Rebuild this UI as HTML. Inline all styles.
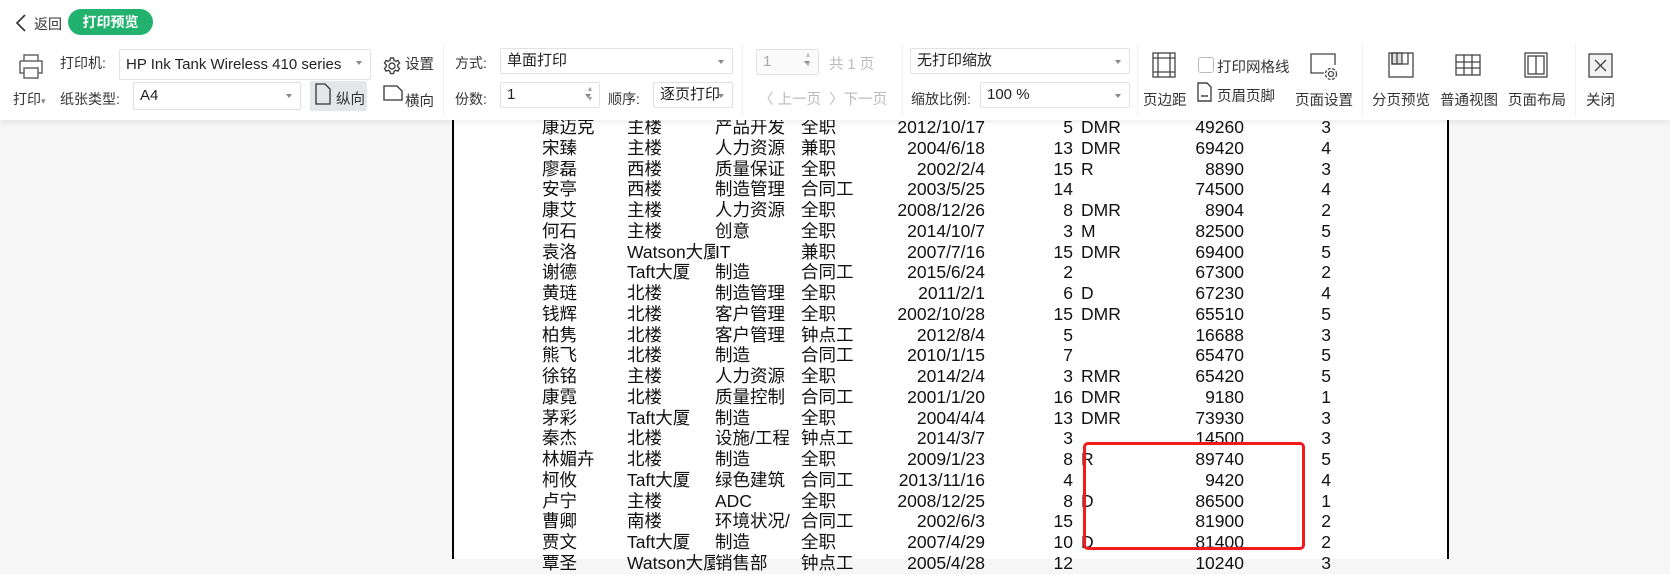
<!DOCTYPE html>
<html><head><meta charset="utf-8"><style>
*{margin:0;padding:0;box-sizing:border-box}
body{width:1670px;height:559px;overflow:hidden;background:#f6f6f6;font-family:"Liberation Sans","Noto Sans CJK SC",sans-serif;color:#333;position:relative;font-size:13.5px}
.a{position:absolute;white-space:nowrap}
#tb{position:absolute;left:0;top:0;width:1670px;height:120px;background:#fff;box-shadow:0 2px 6px rgba(0,0,0,.08);z-index:5}
.sel{position:absolute;border:1px solid #e2e2e2;border-radius:2px;background:#fff;height:26px;line-height:24px;padding-left:6px;font-size:15px;color:#222}
.sel::after{content:"";position:absolute;right:8px;top:11px;border:3px solid transparent;border-top:4px solid #888}
.sep{position:absolute;top:44px;width:1px;height:72px;background:#f0f0f0}
.lab{font-size:14px;color:#333}
.g{color:#bbb}
#page{position:absolute;left:450px;top:0;width:997px;height:559px;background:#fff;border-left:2px solid #000;border-right:2px solid #000;margin-left:2px}
.r{position:absolute;font-size:17.5px;color:#111;white-space:nowrap;height:21px;line-height:21px}
.r span{position:absolute;top:0}
</style></head><body>
<div id="page"></div>
<div id="rows"></div>
<div class="a" style="left:1083px;top:442px;width:222px;height:108px;border:3px solid #f21a1a;border-radius:5px;z-index:3"></div>

<div id="tb">
<svg class="a" style="left:15px;top:14px" width="12" height="18" viewBox="0 0 12 18"><path d="M10 1 L2 9 L10 17" fill="none" stroke="#333" stroke-width="1.6"/></svg>
<div class="a" style="left:34px;top:14px;font-size:14px">返回</div>
<div class="a" style="left:68px;top:9px;width:85px;height:26px;border-radius:13px;background:#22b26d;color:#fff;font-weight:bold;font-size:14px;text-align:center;line-height:26px">打印预览</div>

<svg class="a" style="left:17px;top:52px" width="28" height="28" viewBox="0 0 28 28" fill="none" stroke="#666" stroke-width="1.5"><path d="M7 9V3h14v6M3 9h22v12h-4M7 21H3V9M7 16h14v10H7z"/></svg>
<div class="a lab" style="left:13px;top:89px">打印<span style="font-size:9px;color:#888">▾</span></div>
<div class="a lab" style="left:60px;top:53px">打印机:</div>
<div class="sel" style="left:119px;top:49px;width:252px;height:31px;line-height:29px">HP Ink Tank Wireless 410 series</div>
<svg class="a" style="left:382px;top:56px" width="20" height="20" viewBox="0 0 20 20" fill="none" stroke="#444" stroke-width="1.4"><circle cx="10" cy="10" r="3"/><path d="M8.5 2h3l.5 2.3 1.8 1 2.2-.8 1.5 2.6-1.7 1.6v2.2l1.7 1.6-1.5 2.6-2.2-.8-1.8 1-.5 2.3h-3l-.5-2.3-1.8-1-2.2.8-1.5-2.6 1.7-1.6V8.7L2.5 7.1 4 4.5l2.2.8 1.8-1z"/></svg>
<div class="a lab" style="left:405px;top:53px;font-size:14.5px">设置</div>
<div class="a lab" style="left:60px;top:89px">纸张类型:</div>
<div class="sel" style="left:133px;top:82px;width:168px;height:28px;line-height:26px">A4</div>
<div class="a" style="left:310px;top:81px;width:57px;height:30px;background:#e4e6ea;border-radius:2px"></div>
<svg class="a" style="left:314px;top:83px" width="18" height="22" viewBox="0 0 18 22" fill="none" stroke="#333" stroke-width="1.3"><path d="M2 1h9l5 5v15H2z"/></svg>
<div class="a lab" style="left:336px;top:88px;font-size:14.5px">纵向</div>
<svg class="a" style="left:383px;top:84px" width="20" height="18" viewBox="0 0 20 18" fill="none" stroke="#333" stroke-width="1.3"><path d="M1 2h13l5 5v9H1z"/></svg>
<div class="a lab" style="left:405px;top:90px;font-size:14.5px">横向</div>
<div class="sep" style="left:443px"></div>

<div class="a lab" style="left:455px;top:53px">方式:</div>
<div class="sel" style="left:500px;top:48px;width:233px">单面打印</div>
<div class="a lab" style="left:455px;top:89px">份数:</div>
<div class="sel" style="left:500px;top:82px;width:100px">1</div>
<div class="a" style="left:588px;top:84px;font-size:8px;color:#999;line-height:10px">▴<br>▾</div>
<div class="a lab" style="left:608px;top:89px">顺序:</div>
<div class="sel" style="left:653px;top:82px;width:80px">逐页打印</div>
<div class="sep" style="left:742px"></div>

<div class="sel g" style="left:756px;top:49px;width:63px;color:#aaa;background:#fafafa">1</div>
<div class="a" style="left:806px;top:50px;font-size:8px;color:#bbb;line-height:10px">▴<br>▾</div>
<div class="a lab g" style="left:829px;top:53px;font-size:14.5px">共 1 页</div>
<div class="a lab g" style="left:759px;top:88px;font-size:14.5px">〈 上一页&nbsp;&nbsp;〉下一页</div>
<div class="sep" style="left:902px"></div>

<div class="sel" style="left:910px;top:48px;width:220px">无打印缩放</div>
<div class="a lab" style="left:911px;top:89px">缩放比例:</div>
<div class="sel" style="left:980px;top:82px;width:150px">100 %</div>
<div class="sep" style="left:1137px"></div>

<svg class="a" style="left:1152px;top:52px" width="24" height="26" viewBox="0 0 24 26" fill="none" stroke="#444" stroke-width="1.3"><rect x="1" y="1" width="22" height="24"/><path d="M6 1v24M18 1v24M1 6h22M1 20h22"/></svg>
<div class="a lab" style="left:1143px;top:89px;font-size:14.5px">页边距</div>
<div class="a" style="left:1198px;top:57px;width:16px;height:16px;border:1px solid #bbb;border-radius:3px"></div>
<div class="a lab" style="left:1217px;top:56px;font-size:14.5px">打印网格线</div>
<svg class="a" style="left:1196px;top:82px" width="16" height="20" viewBox="0 0 16 20" fill="none" stroke="#444" stroke-width="1.4"><path d="M2 1h9l4 4v14H2z M5 14h7"/></svg>
<div class="a lab" style="left:1217px;top:85px;font-size:14.5px">页眉页脚</div>
<svg class="a" style="left:1310px;top:53px" width="28" height="28" viewBox="0 0 28 28" fill="none" stroke="#444" stroke-width="1.3"><path d="M14 20H1V1h24v11"/><circle cx="21" cy="21" r="2.5"/><circle cx="21" cy="21" r="5.5" stroke-dasharray="3 1.5"/></svg>
<div class="a lab" style="left:1295px;top:89px;font-size:14.5px">页面设置</div>
<div class="sep" style="left:1362px"></div>

<svg class="a" style="left:1388px;top:52px" width="26" height="26" viewBox="0 0 26 26" fill="none" stroke="#444" stroke-width="1.3"><rect x="1" y="1" width="24" height="24"/><rect x="4" y="1" width="10" height="11" fill="#ddd"/><path d="M9 1v11M4 1v11h16V1"/></svg>
<div class="a lab" style="left:1372px;top:89px;font-size:14.5px">分页预览</div>
<svg class="a" style="left:1455px;top:54px" width="26" height="22" viewBox="0 0 26 22" fill="none" stroke="#444" stroke-width="1.3"><rect x="1" y="1" width="24" height="20"/><path d="M9 1v20M17 1v20M1 8h24M1 14h24"/></svg>
<div class="a lab" style="left:1440px;top:89px;font-size:14.5px">普通视图</div>
<svg class="a" style="left:1524px;top:52px" width="24" height="26" viewBox="0 0 24 26" fill="none" stroke="#444" stroke-width="1.3"><rect x="1" y="1" width="22" height="24"/><rect x="4" y="4" width="16" height="18"/><path d="M12 4v18"/></svg>
<div class="a lab" style="left:1508px;top:89px;font-size:14.5px">页面布局</div>
<div class="sep" style="left:1575px"></div>
<svg class="a" style="left:1588px;top:53px" width="25" height="25" viewBox="0 0 25 25" fill="none" stroke="#444" stroke-width="1.3"><rect x="1" y="1" width="23" height="23" fill="#f2f2f2"/><path d="M7 7l11 11M18 7L7 18"/></svg>
<div class="a lab" style="left:1586px;top:89px;font-size:14.5px">关闭</div>
</div>

<script>
var d=[["康迈克","主楼","产品开发","全职","2012/10/17","5","DMR","49260","3"],
["宋臻","主楼","人力资源","兼职","2004/6/18","13","DMR","69420","4"],
["廖磊","西楼","质量保证","全职","2002/2/4","15","R","8890","3"],
["安亭","西楼","制造管理","合同工","2003/5/25","14","","74500","4"],
["康艾","主楼","人力资源","全职","2008/12/26","8","DMR","8904","2"],
["何石","主楼","创意","全职","2014/10/7","3","M","82500","5"],
["袁洛","Watson大厦","IT","兼职","2007/7/16","15","DMR","69400","5"],
["谢德","Taft大厦","制造","合同工","2015/6/24","2","","67300","2"],
["黄琏","北楼","制造管理","全职","2011/2/1","6","D","67230","4"],
["钱辉","北楼","客户管理","全职","2002/10/28","15","DMR","65510","5"],
["柏隽","北楼","客户管理","钟点工","2012/8/4","5","","16688","3"],
["熊飞","北楼","制造","合同工","2010/1/15","7","","65470","5"],
["徐铭","主楼","人力资源","全职","2014/2/4","3","RMR","65420","5"],
["康霓","北楼","质量控制","合同工","2001/1/20","16","DMR","9180","1"],
["茅彩","Taft大厦","制造","全职","2004/4/4","13","DMR","73930","3"],
["秦杰","北楼","设施/工程","钟点工","2014/3/7","3","","14500","3"],
["林媚卉","北楼","制造","全职","2009/1/23","8","R","89740","5"],
["柯攸","Taft大厦","绿色建筑","合同工","2013/11/16","4","","9420","4"],
["卢宁","主楼","ADC","全职","2008/12/25","8","D","86500","1"],
["曹卿","南楼","环境状况/","合同工","2002/6/3","15","","81900","2"],
["贾文","Taft大厦","制造","全职","2007/4/29","10","D","81400","2"],
["覃圣","Watson大厦","销售部","钟点工","2005/4/28","12","","10240","3"]];
var h="";
d.forEach(function(r,i){var t=117+i*20.75;
var w1=r[1].indexOf("Watson")==0?'<span style="left:627px;width:88px;overflow:hidden">'+r[1]+'</span>':'<span style="left:627px">'+r[1]+'</span>';
h+='<div class="r" style="top:'+t+'px;left:0;width:1400px"><span style="left:542px">'+r[0]+'</span>'+w1+
'<span style="left:715px;width:86px;overflow:hidden">'+r[2]+'</span><span style="left:801px">'+r[3]+'</span>'+
'<span style="right:'+(1400-985)+'px">'+r[4]+'</span><span style="right:'+(1400-1073)+'px">'+r[5]+'</span>'+
'<span style="left:1081px">'+r[6]+'</span><span style="right:'+(1400-1244)+'px">'+r[7]+'</span><span style="right:'+(1400-1331)+'px">'+r[8]+'</span></div>';});
document.getElementById("rows").innerHTML=h;
</script>
</body></html>
